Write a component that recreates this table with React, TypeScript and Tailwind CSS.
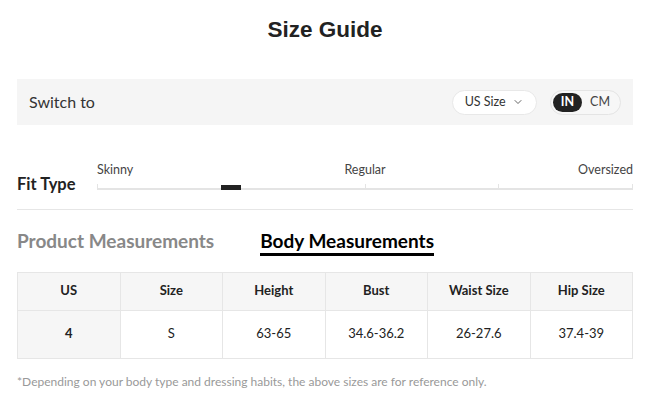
import { ChevronDown } from 'lucide-react';

const headers = ['US', 'Size', 'Height', 'Bust', 'Waist Size', 'Hip Size'];
const row = ['4', 'S', '63-65', '34.6-36.2', '26-27.6', '37.4-39'];

export default function App() {
    return (
        <div className="w-[656px] h-[397px] bg-white pl-[17px] pr-[23px] text-[#222]" style={{ fontFamily: 'Lato, "Open Sans", sans-serif' }}>
            {/* Title */}
            <div className="pt-[17px] h-[79px]">
                <h1 className="text-center text-[22.5px] font-bold text-[#222] leading-[26px]" style={{ fontFamily: '"Liberation Sans", Arial, sans-serif' }}>
                    Size Guide
                </h1>
            </div>

            {/* Switch bar */}
            <div className="h-[46px] bg-[#f5f5f5] flex items-center justify-between pl-3 pr-3">
                <span className="text-[16px] text-[#333]">Switch to</span>
                <div className="flex items-center gap-[13px]">
                    <button className="h-[25px] px-3 flex items-center gap-1.5 bg-white rounded-full border border-[#e8e8e8] text-[12.5px] text-[#333]">
                        US Size
                        <ChevronDown size={12} strokeWidth={1.5} />
                    </button>
                    <div className="h-[25px] flex items-center rounded-full border border-[#e4e4e4] bg-[#f7f7f7] p-[2px] text-[12.5px]">
                        <span className="h-[19px] px-2 flex items-center rounded-full bg-[#222] text-white font-bold">IN</span>
                        <span className="px-2 text-[#444]">CM</span>
                    </div>
                </div>
            </div>

            {/* Fit type */}
            <div className="flex items-end pt-[39px] pb-[19px] border-b border-[#e6e6e6]">
                <span className="w-[80px] shrink-0 text-[16.5px] font-bold text-[#222] leading-none mb-[-3px]">Fit Type</span>
                <div className="flex-1">
                    <div className="relative flex justify-between text-[12.5px] text-[#444] leading-none mb-[11px]">
                        <span>Skinny</span>
                        <span className="absolute left-[268px] -translate-x-1/2">Regular</span>
                        <span>Oversized</span>
                    </div>
                    <div className="relative h-[2px] bg-[#e4e4e4]">
                        <div className="absolute left-0 top-[-4px] w-px h-[5px] bg-[#e4e4e4]" />
                        <div className="absolute left-[268px] top-[-4px] w-px h-[5px] bg-[#e4e4e4]" />
                        <div className="absolute left-[401px] top-[-4px] w-px h-[5px] bg-[#e4e4e4]" />
                        <div className="absolute right-0 top-[-4px] w-px h-[5px] bg-[#e4e4e4]" />
                        <div className="absolute left-[124px] top-[-3px] w-[20px] h-[5px] bg-[#222]" />
                    </div>
                </div>
            </div>

            {/* Tabs */}
            <div className="flex items-start gap-[46px] pt-[18px] h-[62px]">
                <span className="text-[19px] font-bold text-[#888] leading-[25px]">Product Measurements</span>
                <span className="text-[19px] font-bold text-black leading-[25px] border-b-[3px] border-black">Body Measurements</span>
            </div>

            {/* Table */}
            <div className="grid grid-cols-6 border-t border-l border-[#e6e6e6] text-[13px] text-[#222]">
                {headers.map((h) => (
                    <div key={h} className="h-[38px] flex items-center justify-center bg-[#f6f6f6] border-r border-b border-[#e6e6e6] font-bold">
                        {h}
                    </div>
                ))}
                {row.map((c, i) => (
                    <div
                        key={i}
                        className={`h-[48px] flex items-center justify-center border-r border-b border-[#e6e6e6] ${i === 0 ? 'bg-[#f6f6f6] font-bold' : 'bg-white'}`}
                    >
                        {c}
                    </div>
                ))}
            </div>

            <p className="mt-[14px] text-[12px] text-[#999]">
                *Depending on your body type and dressing habits, the above sizes are for reference only.
            </p>
        </div>
    );
}
